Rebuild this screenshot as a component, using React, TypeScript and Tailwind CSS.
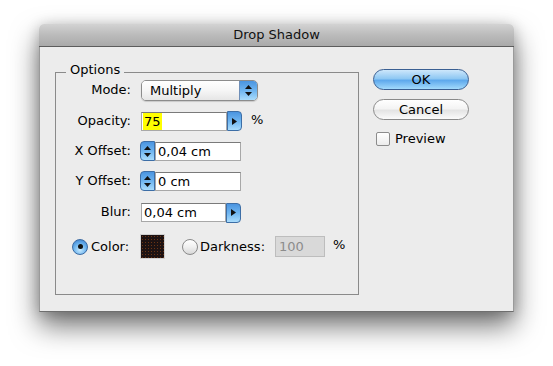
import React from 'react';

const ArrowRight = () => (
  <svg width="5" height="7" viewBox="0 0 5 7">
    <path d="M0 0 L5 3.5 L0 7 Z" fill="#111" />
  </svg>
);

const UpDown = () => (
  <svg width="7" height="11" viewBox="0 0 7 11">
    <path d="M3.5 0 L7 4 L0 4 Z" fill="#111" />
    <path d="M0 7 L7 7 L3.5 11 Z" fill="#111" />
  </svg>
);

// blue button glued to the right side of a field
const FieldArrow = () => (
  <div className="w-[15px] h-[20px] rounded-r-[4px] border border-[#3d6ea6] bg-[linear-gradient(to_bottom,#4a94e0_0%,#6fb5f0_50%,#a9dcfc_100%)] flex items-center justify-center">
    <ArrowRight />
  </div>
);

const Stepper = () => (
  <div className="w-[15px] h-[20px] rounded-l-[4px] border border-[#3d6ea6] bg-[linear-gradient(to_bottom,#4a94e0_0%,#6fb5f0_50%,#a9dcfc_100%)] flex items-center justify-center">
    <UpDown />
  </div>
);

const Field = ({ value, width, highlight }: { value: string; width: string; highlight?: boolean }) => (
  <div className={`${width} h-[19px] bg-white border border-[#a8a8a8] border-t-[#7a7a7a] flex items-center px-[1px] text-[13px] leading-none text-black`}>
    {highlight ? <span className="bg-[#ffff00] px-[1px] py-[2px]">{value}</span> : <span className="pl-[1px]">{value}</span>}
  </div>
);

const Label = ({ children }: { children: React.ReactNode }) => (
  <span className="w-[75px] text-right text-[13px] leading-none text-black -mt-[2px]">{children}</span>
);

const Radio = ({ checked }: { checked?: boolean }) =>
  checked ? (
    <div className="w-[16px] h-[16px] rounded-full border border-[#3a6aa3] bg-[radial-gradient(circle_at_50%_70%,#c9ebff_0%,#6db4ee_50%,#2f74c8_100%)] flex items-center justify-center">
      <div className="w-[5px] h-[5px] rounded-full bg-[#111]" />
    </div>
  ) : (
    <div className="w-[16px] h-[16px] rounded-full border border-[#8a8a8a] bg-[linear-gradient(to_bottom,#ffffff_0%,#f0f0f0_50%,#d8d8d8_100%)]" />
  );

const App = () => {
  return (
    <div className="w-[553px] h-[366px] bg-white pt-[24px] pl-[39px] font-['DejaVu_Sans',sans-serif] overflow-hidden">
      <div className="w-[475px] h-[288px] flex flex-col rounded-t-[5px] shadow-[0_14px_28px_rgba(0,0,0,0.55),0_2px_14px_rgba(0,0,0,0.2)]">
        {/* title bar */}
        <div className="h-[23px] rounded-t-[5px] bg-[linear-gradient(to_bottom,#d3d3d3_0%,#bdbdbd_45%,#a9a9a9_100%)] border-b border-[#5c5c5c] flex items-center justify-center text-[13px] text-[#111]">
          Drop Shadow
        </div>

        {/* body */}
        <div className="flex-1 bg-[#ececec] border-x border-b border-x-[#9a9a9a] border-b-[#6e6e6e] flex items-start pl-[15px]">
          {/* Options group */}
          <div className="relative mt-[25px] w-[304px] h-[223px] border border-[#8a8a8a] pt-[7px] flex flex-col">
            <span className="absolute -top-[11px] left-[10px] px-[4px] bg-[#ececec] text-[13px] leading-[16px] text-black">Options</span>

            <div className="flex items-center h-[21px]">
              <Label>Mode:</Label>
              <div className="ml-[10px] w-[117px] h-[21px] flex rounded-[5px] border border-[#8c8c8c] overflow-hidden shadow-[0_1px_1px_rgba(0,0,0,0.15)]">
                <div className="flex-1 bg-[linear-gradient(to_bottom,#ffffff_0%,#f6f6f6_50%,#e6e6e6_100%)] flex items-center pl-[8px] text-[13px] text-black">Multiply</div>
                <div className="w-[18px] border-l border-[#6f8fb8] bg-[linear-gradient(to_bottom,#4a94e0_0%,#6fb5f0_50%,#a9dcfc_100%)] flex items-center justify-center">
                  <UpDown />
                </div>
              </div>
            </div>

            <div className="flex items-center h-[22px] mt-[9px]">
              <Label>Opacity:</Label>
              <div className="ml-[10px] flex items-center">
                <Field value="75" width="w-[86px]" highlight />
                <FieldArrow />
              </div>
              <span className="ml-[9px] text-[13px] text-black -mt-[3px]">%</span>
            </div>

            <div className="flex items-center h-[20px] mt-[9px]">
              <Label>X Offset:</Label>
              <div className="ml-[9px] flex items-center">
                <Stepper />
                <Field value="0,04 cm" width="w-[86px]" />
              </div>
            </div>

            <div className="flex items-center h-[20px] mt-[10px]">
              <Label>Y Offset:</Label>
              <div className="ml-[9px] flex items-center">
                <Stepper />
                <Field value="0 cm" width="w-[86px]" />
              </div>
            </div>

            <div className="flex items-center h-[21px] mt-[11px]">
              <Label>Blur:</Label>
              <div className="ml-[10px] flex items-center">
                <Field value="0,04 cm" width="w-[85px]" />
                <FieldArrow />
              </div>
            </div>

            <div className="flex items-center h-[25px] mt-[11px] pl-[16px]">
              <Radio checked />
              <span className="ml-[3px] w-[49px] text-[13px] text-black">Color:</span>
              <div className="w-[25px] h-[25px] border border-[#d0d0d0] bg-[#1d1212] bg-[radial-gradient(#6a3414_0.6px,transparent_0.9px)] bg-[length:3px_3px]" />
              <div className="ml-[17px]">
                <Radio />
              </div>
              <span className="ml-[2px] w-[75px] text-[13px] text-black">Darkness:</span>
              <div className="w-[50px] h-[21px] bg-[#d9d9d9] border border-[#bdbdbd] flex items-center pl-[3px] text-[13px] text-[#8c8c8c]">100</div>
              <span className="ml-[8px] text-[13px] text-black -mt-[3px]">%</span>
            </div>
          </div>

          {/* buttons */}
          <div className="ml-[14px] mt-[22px] flex flex-col">
            <button className="w-[96px] h-[21px] rounded-full border border-[#3a5f92] bg-[linear-gradient(to_bottom,#cde7fb_0%,#8fc8f3_45%,#5fa9ec_55%,#a2dafc_100%)] text-[13px] leading-none text-black">
              OK
            </button>
            <button className="mt-[9px] w-[96px] h-[21px] rounded-full border border-[#8a8a8a] bg-[linear-gradient(to_bottom,#ffffff_0%,#f4f4f4_45%,#e4e4e4_55%,#fbfbfb_100%)] text-[13px] leading-none text-black">
              Cancel
            </button>
            <div className="mt-[9px] ml-[3px] flex items-center">
              <div className="w-[14px] h-[14px] rounded-[2px] border border-[#8c8c8c] bg-[linear-gradient(to_bottom,#ffffff_0%,#ececec_100%)]" />
              <span className="ml-[5px] text-[13px] text-black">Preview</span>
            </div>
          </div>
        </div>
      </div>
    </div>
  );
};

export default App;
